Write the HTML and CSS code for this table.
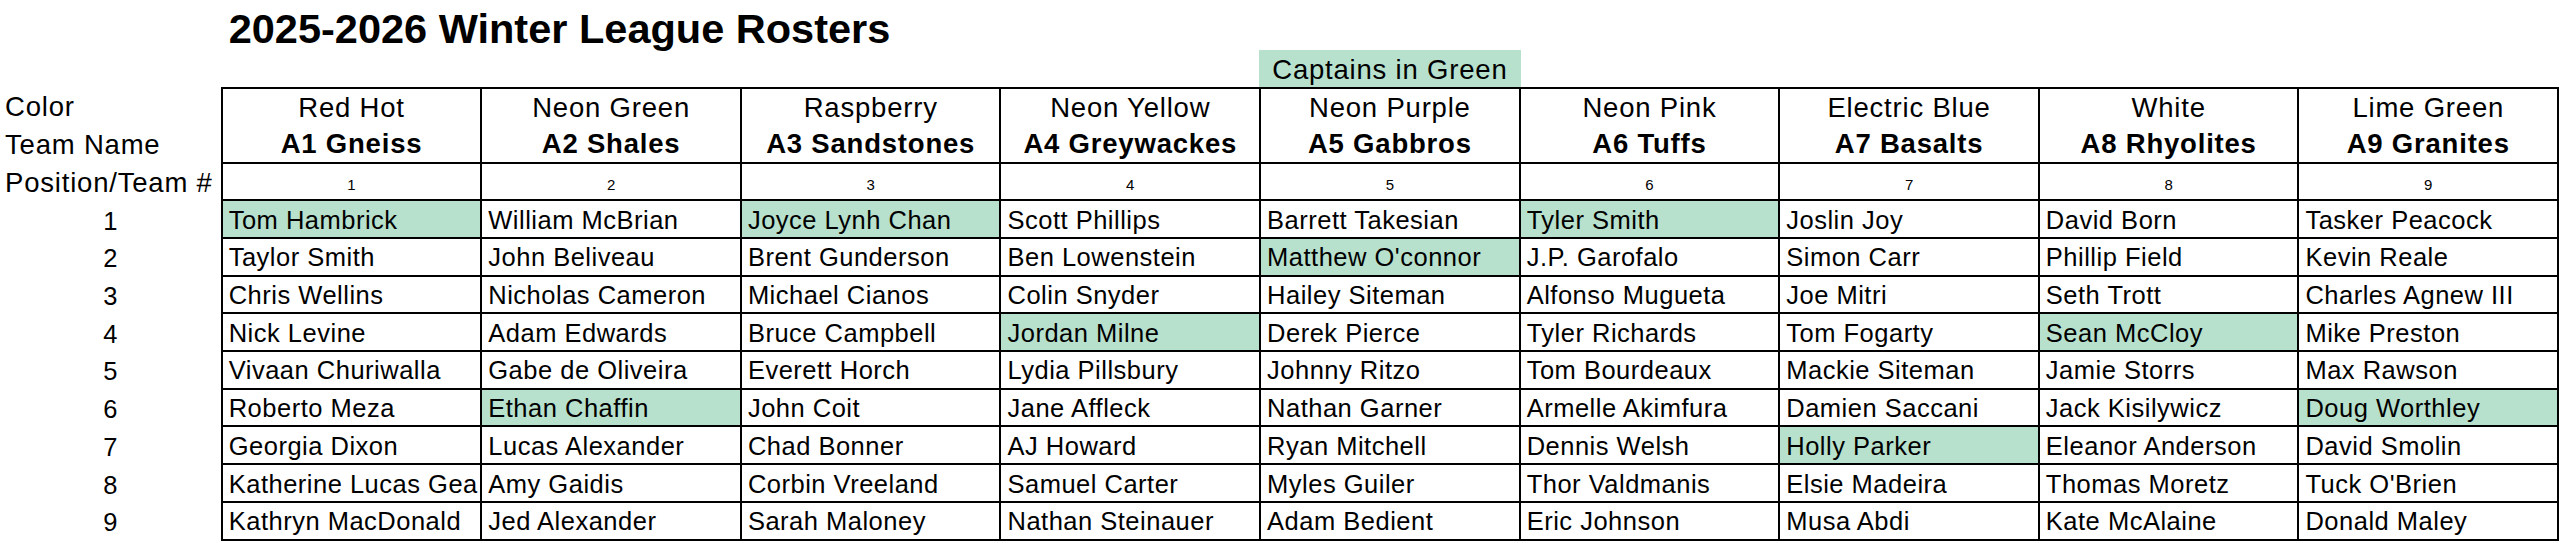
FILE: index.html
```html
<!DOCTYPE html>
<html lang="en">
<head>
<meta charset="utf-8">
<title>2025-2026 Winter League Rosters</title>
<link rel="stylesheet" href="styles.css">
</head>
<body>
<div class="sheet">
  <div class="band title-band">
    <h1 class="title">2025-2026 Winter League Rosters</h1>
  </div>
  <div class="band note-band">
    <div class="note">Captains in Green</div>
  </div>
  <div class="roster">
    <div class="label">Color</div>
    <div class="head color first">Red Hot</div>
    <div class="head color">Neon Green</div>
    <div class="head color">Raspberry</div>
    <div class="head color">Neon Yellow</div>
    <div class="head color">Neon Purple</div>
    <div class="head color">Neon Pink</div>
    <div class="head color">Electric Blue</div>
    <div class="head color">White</div>
    <div class="head color">Lime Green</div>

    <div class="label">Team Name</div>
    <div class="head team first">A1 Gneiss</div>
    <div class="head team">A2 Shales</div>
    <div class="head team">A3 Sandstones</div>
    <div class="head team">A4 Greywackes</div>
    <div class="head team">A5 Gabbros</div>
    <div class="head team">A6 Tuffs</div>
    <div class="head team">A7 Basalts</div>
    <div class="head team">A8 Rhyolites</div>
    <div class="head team">A9 Granites</div>

    <div class="label">Position/Team #</div>
    <div class="num first">1</div>
    <div class="num">2</div>
    <div class="num">3</div>
    <div class="num">4</div>
    <div class="num">5</div>
    <div class="num">6</div>
    <div class="num">7</div>
    <div class="num">8</div>
    <div class="num">9</div>

    <div class="pos">1</div>
    <div class="cell first captain">Tom Hambrick</div>
    <div class="cell">William McBrian</div>
    <div class="cell captain">Joyce Lynh Chan</div>
    <div class="cell">Scott Phillips</div>
    <div class="cell">Barrett Takesian</div>
    <div class="cell captain">Tyler Smith</div>
    <div class="cell">Joslin Joy</div>
    <div class="cell">David Born</div>
    <div class="cell">Tasker Peacock</div>

    <div class="pos">2</div>
    <div class="cell first">Taylor Smith</div>
    <div class="cell">John Beliveau</div>
    <div class="cell">Brent Gunderson</div>
    <div class="cell">Ben Lowenstein</div>
    <div class="cell captain">Matthew O'connor</div>
    <div class="cell">J.P. Garofalo</div>
    <div class="cell">Simon Carr</div>
    <div class="cell">Phillip Field</div>
    <div class="cell">Kevin Reale</div>

    <div class="pos">3</div>
    <div class="cell first">Chris Wellins</div>
    <div class="cell">Nicholas Cameron</div>
    <div class="cell">Michael Cianos</div>
    <div class="cell">Colin Snyder</div>
    <div class="cell">Hailey Siteman</div>
    <div class="cell">Alfonso Mugueta</div>
    <div class="cell">Joe Mitri</div>
    <div class="cell">Seth Trott</div>
    <div class="cell">Charles Agnew III</div>

    <div class="pos">4</div>
    <div class="cell first">Nick Levine</div>
    <div class="cell">Adam Edwards</div>
    <div class="cell">Bruce Campbell</div>
    <div class="cell captain">Jordan Milne</div>
    <div class="cell">Derek Pierce</div>
    <div class="cell">Tyler Richards</div>
    <div class="cell">Tom Fogarty</div>
    <div class="cell captain">Sean McCloy</div>
    <div class="cell">Mike Preston</div>

    <div class="pos">5</div>
    <div class="cell first">Vivaan Churiwalla</div>
    <div class="cell">Gabe de Oliveira</div>
    <div class="cell">Everett Horch</div>
    <div class="cell">Lydia Pillsbury</div>
    <div class="cell">Johnny Ritzo</div>
    <div class="cell">Tom Bourdeaux</div>
    <div class="cell">Mackie Siteman</div>
    <div class="cell">Jamie Storrs</div>
    <div class="cell">Max Rawson</div>

    <div class="pos">6</div>
    <div class="cell first">Roberto Meza</div>
    <div class="cell captain">Ethan Chaffin</div>
    <div class="cell">John Coit</div>
    <div class="cell">Jane Affleck</div>
    <div class="cell">Nathan Garner</div>
    <div class="cell">Armelle Akimfura</div>
    <div class="cell">Damien Saccani</div>
    <div class="cell">Jack Kisilywicz</div>
    <div class="cell captain">Doug Worthley</div>

    <div class="pos">7</div>
    <div class="cell first">Georgia Dixon</div>
    <div class="cell">Lucas Alexander</div>
    <div class="cell">Chad Bonner</div>
    <div class="cell">AJ Howard</div>
    <div class="cell">Ryan Mitchell</div>
    <div class="cell">Dennis Welsh</div>
    <div class="cell captain">Holly Parker</div>
    <div class="cell">Eleanor Anderson</div>
    <div class="cell">David Smolin</div>

    <div class="pos">8</div>
    <div class="cell first">Katherine Lucas Gea</div>
    <div class="cell">Amy Gaidis</div>
    <div class="cell">Corbin Vreeland</div>
    <div class="cell">Samuel Carter</div>
    <div class="cell">Myles Guiler</div>
    <div class="cell">Thor Valdmanis</div>
    <div class="cell">Elsie Madeira</div>
    <div class="cell">Thomas Moretz</div>
    <div class="cell">Tuck O'Brien</div>

    <div class="pos">9</div>
    <div class="cell first">Kathryn MacDonald</div>
    <div class="cell">Jed Alexander</div>
    <div class="cell">Sarah Maloney</div>
    <div class="cell">Nathan Steinauer</div>
    <div class="cell">Adam Bedient</div>
    <div class="cell">Eric Johnson</div>
    <div class="cell">Musa Abdi</div>
    <div class="cell">Kate McAlaine</div>
    <div class="cell">Donald Maley</div>
  </div>
</div>
</body>
</html>
```

FILE: styles.css
```css
:root {
  --cols: 220.7px 261.6px repeat(8, 259.6px);
  --line: 2px solid #000;
  --captain: #b7e1cd;
}

* {
  box-sizing: border-box;
}

html, body {
  margin: 0;
  padding: 0;
  background: #fff;
}

body {
  font-family: "Liberation Sans", Arial, sans-serif;
  color: #000;
}

.sheet {
  width: 2560px;
}

.band {
  display: grid;
  grid-template-columns: var(--cols);
}

.title-band {
  height: 50px;
}

.title {
  grid-column: 2 / -1;
  margin: 0;
  padding: 8px 0 0 8px;
  font-size: 41.5px;
  line-height: 1;
  font-weight: 700;
  white-space: nowrap;
}

.note-band {
  height: 37.3px;
}

.note {
  grid-column: 6;
  margin-left: -2px;
  background: var(--captain);
  display: flex;
  align-items: center;
  justify-content: center;
  padding-top: 2px;
  font-size: 27.5px;
  letter-spacing: 0.8px;
  white-space: nowrap;
}

.roster {
  display: grid;
  grid-template-columns: var(--cols);
  grid-template-rows: 38.7px 37.7px 37.7px repeat(9, 37.7px);
}

.label,
.head,
.num,
.pos,
.cell {
  display: flex;
  align-items: center;
  white-space: nowrap;
  overflow: hidden;
}

.label {
  padding-left: 5px;
  font-size: 27.5px;
  letter-spacing: 0.8px;
  overflow: visible;
}

.head {
  justify-content: center;
  font-size: 27.5px;
  letter-spacing: 0.8px;
  border-right: var(--line);
}

.head.color {
  border-top: var(--line);
}

.head.team {
  font-weight: 700;
  border-bottom: var(--line);
}

.num {
  justify-content: center;
  font-size: 15px;
  padding-top: 6px;
  border-right: var(--line);
  border-bottom: var(--line);
}

.pos {
  justify-content: center;
  font-size: 25.5px;
  padding-top: 2px;
}

.cell {
  padding: 2px 0 0 6px;
  font-size: 25.5px;
  letter-spacing: 0.5px;
  border-right: var(--line);
  border-bottom: var(--line);
}

.first {
  border-left: var(--line);
}

.captain {
  background: var(--captain);
}
```
